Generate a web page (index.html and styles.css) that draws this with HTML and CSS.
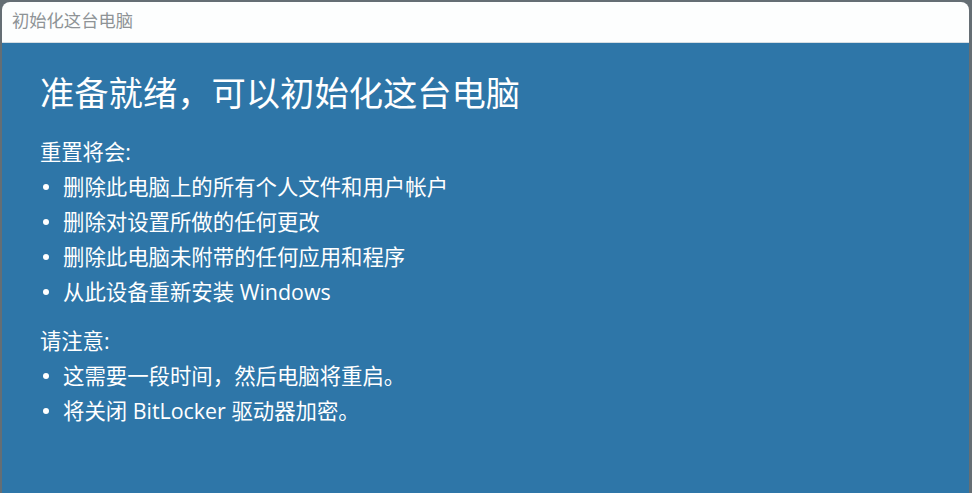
FILE: index.html
```html
<!DOCTYPE html>
<html lang="zh-CN">
<head>
    <meta charset="UTF-8">
    <meta name="viewport" content="width=device-width, initial-scale=1.0">
    <title>初始化这台电脑</title>
    <link rel="stylesheet" href="styles.css">
</head>
<body>

<div class="window">
    <div class="title-bar">初始化这台电脑</div>
    <div class="content">
        <h1>准备就绪，可以初始化这台电脑</h1>

        <p class="label">重置将会:</p>
        <ul>
            <li>删除此电脑上的所有个人文件和用户帐户</li>
            <li>删除对设置所做的任何更改</li>
            <li>删除此电脑未附带的任何应用和程序</li>
            <li>从此设备重新安装 Windows</li>
        </ul>

        <p class="label notice">请注意:</p>
        <ul>
            <li>这需要一段时间，然后电脑将重启。</li>
            <li>将关闭 BitLocker 驱动器加密。</li>
        </ul>
    </div>
</div>

</body>
</html>
```

FILE: styles.css
```css
html, body {
    height: 100%;
}

body {
    margin: 0;
    background: #656e74;
    font-family: "Open Sans", "Noto Sans CJK SC", sans-serif;
}

.window {
    height: 100%;
    box-sizing: border-box;
    padding: 2px 3px 0 2px;
    display: flex;
    flex-direction: column;
}

.title-bar {
    height: 40px;
    background: #fdfefe;
    border-radius: 8px 8px 0 0;
    border-bottom: 1px solid #d5dde3;
    color: #8e9396;
    font-size: 17.3px;
    line-height: 38px;
    padding-left: 10px;
}

.content {
    flex: 1;
    background: #2e76a8;
    color: #ffffff;
    padding: 27px 38px;
}

h1 {
    margin: 0;
    font-size: 34.3px;
    font-weight: normal;
    line-height: 46px;
}

.label {
    margin: 18px 0 0;
    font-size: 21.3px;
    line-height: 35px;
}

.notice {
    margin-top: 14px;
}

ul {
    list-style: none;
    margin: 0;
    padding: 0;
}

li {
    font-size: 21.4px;
    line-height: 35px;
    padding-left: 23px;
    position: relative;
}

li::before {
    content: "";
    position: absolute;
    left: 3px;
    top: 15px;
    width: 6px;
    height: 6px;
    border-radius: 50%;
    background: #ffffff;
}
```
